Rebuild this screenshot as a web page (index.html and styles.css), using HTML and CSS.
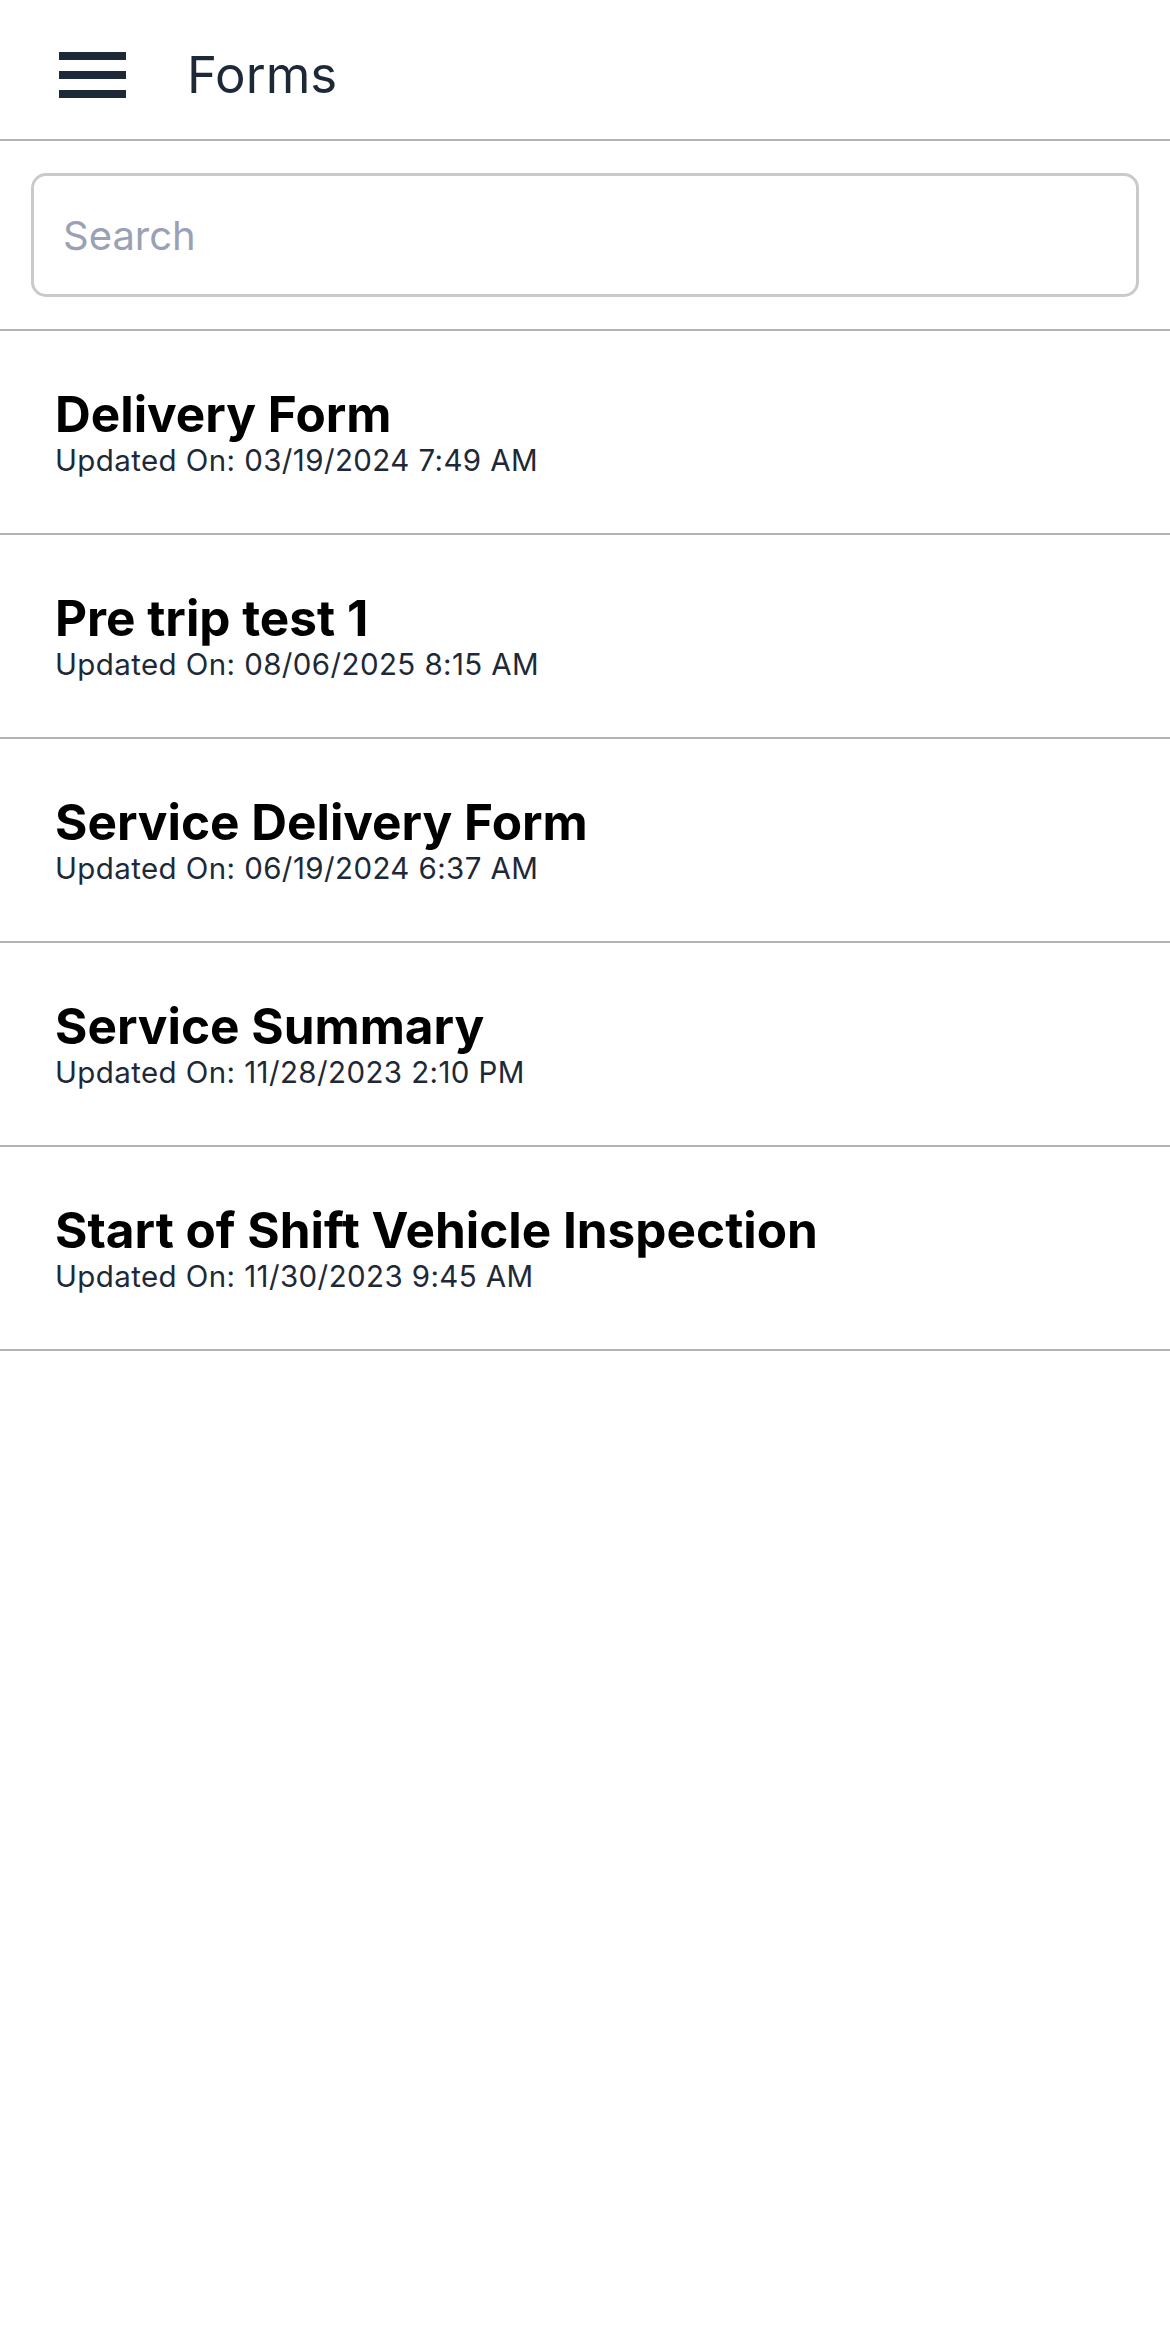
FILE: index.html
```html
<!DOCTYPE html>
<html lang="en">
  <head>
    <meta charset="UTF-8" />
    <meta name="viewport" content="width=device-width, initial-scale=1.0" />
    <title>Forms</title>
    <link rel="stylesheet" href="styles.css">
  </head>
  <body>
    <header class="toolbar">
      <button class="menu-button" aria-label="Menu">
        <svg width="67" height="46" viewBox="0 0 67 46">
          <rect x="0" y="0" width="67" height="8" fill="#1e2937" />
          <rect x="0" y="19" width="67" height="8" fill="#1e2937" />
          <rect x="0" y="38" width="67" height="8" fill="#1e2937" />
        </svg>
      </button>
      <h1 class="toolbar-title">Forms</h1>
    </header>

    <section class="search-bar">
      <input type="text" class="search-input" placeholder="Search" />
    </section>

    <ul class="form-list">
      <li class="form-item">
        <h2 class="form-name">Delivery Form</h2>
        <p class="form-date">Updated On: 03/19/2024 7:49 AM</p>
      </li>
      <li class="form-item">
        <h2 class="form-name">Pre trip test 1</h2>
        <p class="form-date">Updated On: 08/06/2025 8:15 AM</p>
      </li>
      <li class="form-item">
        <h2 class="form-name">Service Delivery Form</h2>
        <p class="form-date">Updated On: 06/19/2024 6:37 AM</p>
      </li>
      <li class="form-item">
        <h2 class="form-name">Service Summary</h2>
        <p class="form-date">Updated On: 11/28/2023 2:10 PM</p>
      </li>
      <li class="form-item">
        <h2 class="form-name">Start of Shift Vehicle Inspection</h2>
        <p class="form-date">Updated On: 11/30/2023 9:45 AM</p>
      </li>
    </ul>
  </body>
</html>
```

FILE: styles.css
```css
:root {
  --main-font: Inter, "Noto Sans", sans-serif;
  --text-color: #1e2937;
  --line-color: #b3b3b3;
  --input-border: #cacaca;
  --placeholder-color: #9aa1b5;
}

html {
  box-sizing: border-box;
  font-family: var(--main-font);
}

*,
*:before,
*:after {
  box-sizing: inherit;
}

body {
  margin: 0;
  min-height: 2327px;
  background-color: #fff;
  overflow-x: hidden;
}

.toolbar {
  display: flex;
  align-items: center;
  height: 141px;
  padding: 10px 0 0 59px;
  border-bottom: 2px solid var(--line-color);
}

.menu-button {
  display: flex;
  padding: 0;
  border: none;
  background: none;
}

.toolbar-title {
  margin: 0 0 0 61px;
  font-size: 51px;
  font-weight: 400;
  color: var(--text-color);
}

.search-bar {
  padding: 32px 31px 32px 31px;
  border-bottom: 2px solid var(--line-color);
}

.search-input {
  display: block;
  width: 100%;
  height: 124px;
  padding: 0 29px;
  border: 3px solid var(--input-border);
  border-radius: 15px;
  font-family: var(--main-font);
  font-size: 40px;
  color: var(--text-color);
  outline: none;
}

.search-input::placeholder {
  color: var(--placeholder-color);
}

.form-list {
  margin: 0;
  padding: 0;
  list-style: none;
}

.form-item {
  display: flex;
  flex-direction: column;
  justify-content: center;
  height: 204px;
  padding: 0 55px;
  border-bottom: 2px solid var(--line-color);
}

.form-name {
  margin: 0;
  font-size: 49.5px;
  font-weight: 700;
  line-height: 1.15;
  color: #000;
}

.form-date {
  margin: 0;
  font-size: 29.5px;
  line-height: 1.22;
  letter-spacing: 0.4px;
  color: var(--text-color);
}
```
